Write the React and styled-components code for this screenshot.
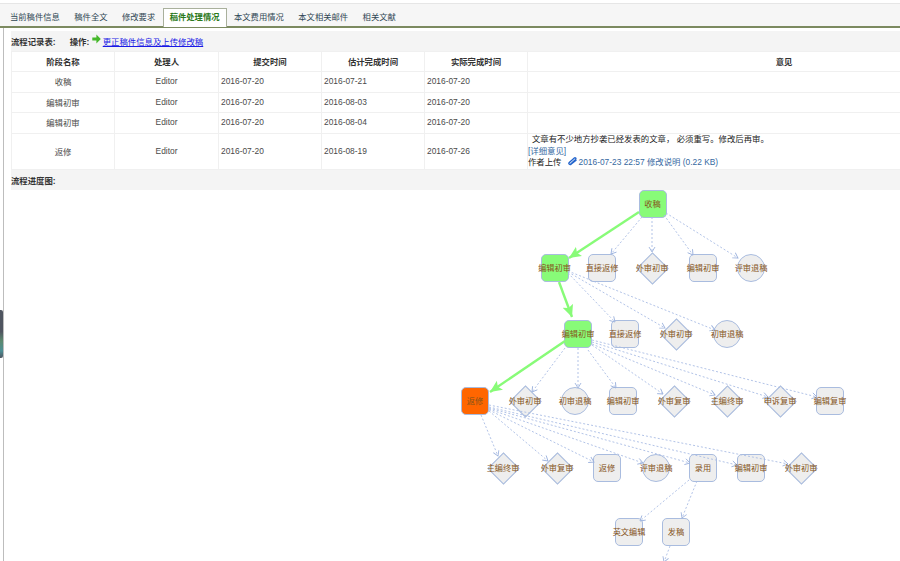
import React from "react";
import styled, { createGlobalStyle } from "styled-components";

const tabs = ["当前稿件信息", "稿件全文", "修改要求", "稿件处理情况", "本文费用情况", "本文相关邮件", "相关文献"];

const rows = [
  { stage: "收稿", due: "2016-07-21", done: "2016-07-20", h: 20 },
  { stage: "编辑初审", due: "2016-08-03", done: "2016-07-20", h: 19 },
  { stage: "编辑初审", due: "2016-08-04", done: "2016-07-20", h: 20 },
  { stage: "返修", due: "2016-08-19", done: "2016-07-26", h: 35, note: true },
];

// centre coordinates are page coordinates, the canvas starts at y = 190
const nodes = [
  { label: "收稿", x: 652.5, y: 204, shape: "rect", fill: "#88fb78" },
  { label: "编辑初审", x: 554.5, y: 268, shape: "rect", fill: "#88fb78" },
  { label: "直接返修", x: 602, y: 268, shape: "rect" },
  { label: "外审初审", x: 652, y: 268, shape: "diamond" },
  { label: "编辑初审", x: 703, y: 268, shape: "rect" },
  { label: "评审退稿", x: 751, y: 268, shape: "circle" },
  { label: "编辑初审", x: 578, y: 334, shape: "rect", fill: "#88fb78" },
  { label: "直接返修", x: 625, y: 334, shape: "rect" },
  { label: "外审初审", x: 676, y: 334, shape: "diamond" },
  { label: "初审退稿", x: 727, y: 334, shape: "circle" },
  { label: "返修", x: 475, y: 401, shape: "rect", fill: "#ff6600" },
  { label: "外审初审", x: 525, y: 401, shape: "diamond" },
  { label: "初审退稿", x: 575, y: 401, shape: "circle" },
  { label: "编辑初审", x: 623, y: 401, shape: "rect" },
  { label: "外审复审", x: 674, y: 401, shape: "diamond" },
  { label: "主编终审", x: 727, y: 401, shape: "diamond" },
  { label: "申诉复审", x: 780, y: 401, shape: "diamond" },
  { label: "编辑复审", x: 830, y: 401, shape: "rect" },
  { label: "主编终审", x: 503, y: 468, shape: "diamond" },
  { label: "外审复审", x: 557, y: 468, shape: "diamond" },
  { label: "返修", x: 607, y: 468, shape: "rect" },
  { label: "评审退稿", x: 656, y: 468, shape: "circle" },
  { label: "录用", x: 703, y: 468, shape: "rect" },
  { label: "编辑初审", x: 751, y: 468, shape: "rect" },
  { label: "外审初审", x: 801, y: 468, shape: "diamond" },
  { label: "英文编辑", x: 629, y: 532, shape: "rect" },
  { label: "发稿", x: 676, y: 532, shape: "rect" },
];

const greenEdges = [
  [639, 212, 569, 258],
  [559, 282, 572, 317],
  [565, 341, 490, 392],
];

const dashedEdges = [
  [642, 217, 611, 254],
  [652, 217, 652, 252],
  [664, 215, 693, 255],
  [666, 213, 738, 258],
  [568, 273, 615, 322],
  [568, 272, 665, 328],
  [568, 271, 715, 330],
  [565, 348, 532, 392],
  [578, 348, 578, 388],
  [588, 350, 616, 388],
  [592, 345, 663, 394],
  [592, 344, 715, 395],
  [592, 342, 768, 397],
  [592, 340, 817, 397],
  [481, 415, 498, 456],
  [489, 411, 548, 461],
  [489, 410, 594, 462],
  [489, 409, 643, 463],
  [489, 408, 690, 463],
  [489, 407, 737, 465],
  [489, 405, 788, 464],
  [689, 480, 640, 521],
  [697, 481, 682, 518],
  [670, 546, 664, 562],
];

const GlobalStyle = createGlobalStyle`
  html, body {
    margin: 0;
    background: #fff;
  }
`;

const Page = styled.div`
  position: relative;
  width: 900px;
  height: 561px;
  overflow: hidden;
  padding-top: 3px;
  box-sizing: border-box;
  font-family: "Liberation Sans", "Noto Sans CJK SC", sans-serif;
  font-size: 8.4px;
  color: #4a4a4a;
`;

const TabBar = styled.div`
  display: flex;
  align-items: flex-end;
  height: 22px;
  padding-left: 3px;
  background: #f6f6f6;
  border-top: 1px solid #e6e6e6;
  border-bottom: 2px solid #7c8a60;
`;

const Tab = styled.div`
  box-sizing: border-box;
  height: ${(p) => (p.$active ? "19px" : "18px")};
  margin-right: 0.5px;
  padding: 0 6px;
  font-size: 8.3px;
  line-height: 16px;
  font-weight: ${(p) => (p.$active ? "bold" : "normal")};
  color: ${(p) => (p.$active ? "#2c7a1c" : "#2f4654")};
  background: ${(p) => (p.$active ? "#fff" : "transparent")};
  border: 1px solid ${(p) => (p.$active ? "#a9b09c" : "transparent")};
  border-bottom: none;
  margin-bottom: ${(p) => (p.$active ? "-1px" : "0")};
`;

const Body = styled.div`
  height: 533px;
  margin-left: 3px;
  padding: 3px 0 0 7px;
  border-left: 1px solid #bdbdbd;
`;

const SectionHead = styled.div`
  display: flex;
  align-items: center;
  box-sizing: border-box;
  width: 1040px;
  height: 20px;
  padding-bottom: 1px;
  background: #f4f4f4;
  color: #333;
  font-weight: bold;
`;

const SectionTitle = styled.span`
  margin-right: 14px;
`;

const ActionIcon = styled.svg`
  margin: -3px 1.5px 0 3px;
`;

const ActionLink = styled.a`
  color: #1a1ae6;
  font-weight: normal;
  text-decoration: underline;
`;

const RecordTable = styled.table`
  width: 1030px;
  table-layout: fixed;
  border-collapse: separate;
  border-spacing: 1px;
  background: #f0f0f0;
`;

const HeadCell = styled.th`
  box-sizing: border-box;
  height: 19px;
  padding: 0 0 2px;
  background: #fff;
  color: #333;
  font-size: 8.4px;
  font-weight: bold;
`;

const Cell = styled.td`
  box-sizing: border-box;
  height: ${(p) => p.$h}px;
  padding: 0 ${(p) => (p.$center ? 0 : 2)}px 2px;
  background: #fff;
  font-size: 8.4px;
  text-align: ${(p) => (p.$center ? "center" : "left")};
`;

const NoteCell = styled.td`
  padding: 0;
  background: #fff;
  color: #222;
  font-size: 8.4px;
  line-height: 11.5px;
`;

const NoteLine = styled.div`
  display: flex;
  align-items: center;
  padding-left: ${(p) => p.$indent || 0}px;
`;

const NoteLink = styled.a`
  color: #36699f;
  text-decoration: none;
`;

const Uploader = styled.span`
  margin-right: 6px;
`;

const ClipIcon = styled.svg`
  margin: -3px 2px 0 0;
`;

const Diagram = styled.div`
  position: relative;
  height: 371px;
  margin-left: -11px;
`;

const Edges = styled.svg`
  position: absolute;
  left: 0;
  top: 0;
  z-index: 1;
`;

const Node = styled.div`
  position: absolute;
  left: ${(p) => p.$x - 14}px;
  top: ${(p) => p.$y - 204}px;
  width: 28px;
  height: 28px;
  display: flex;
  align-items: center;
  justify-content: center;

  &::before {
    content: "";
    position: absolute;
    box-sizing: border-box;
    left: ${(p) => (p.$shape === "diamond" ? "2.5px" : "0")};
    top: ${(p) => (p.$shape === "diamond" ? "2.5px" : "0")};
    width: ${(p) => (p.$shape === "diamond" ? "23px" : "28px")};
    height: ${(p) => (p.$shape === "diamond" ? "23px" : "28px")};
    background: ${(p) => p.$fill || "#eeeeee"};
    border: ${(p) => (p.$shape === "rect" ? "1.5px" : "1px")} solid #a9bcdf;
    border-radius: ${(p) => (p.$shape === "circle" ? "50%" : p.$shape === "rect" ? "5px" : "0")};
    transform: ${(p) => (p.$shape === "diamond" ? "rotate(45deg)" : "none")};
  }
`;

const NodeLabel = styled.span`
  position: relative;
  z-index: 2;
  margin-top: -2px;
  white-space: nowrap;
  color: #85541a;
  font-size: 8.2px;
`;

const SideTab = styled.div`
  position: absolute;
  left: 0;
  top: 310px;
  width: 3px;
  height: 48px;
  border-radius: 0 2px 2px 0;
  background: linear-gradient(#4f5560 0 45%, #5c8a70 65%, #4d8f95 85%, #4f5560 100%);
`;

const GreenArrow = () => (
  <ActionIcon width="9" height="10" viewBox="0 0 9 10">
    <path d="M0.3 3.4H4.4V0.6L8.8 5L4.4 9.4V6.6H0.3Z" fill="#45b82a" />
  </ActionIcon>
);

const Clip = () => (
  <ClipIcon width="9" height="9" viewBox="0 0 9 9">
    <path
      d="M2 7.8L7.6 2.4C8.4 1.4 7.3 .4 6.3 1L1.3 5.4C.2 6.6 1.6 8.2 3 7.3L8.4 3"
      fill="none"
      stroke="#2264cc"
      strokeWidth="1.4"
    />
  </ClipIcon>
);

const App = () => {
  return (
    <Page>
      <GlobalStyle />
      <TabBar>
        {tabs.map((t, i) => (
          <Tab key={t} $active={i === 3}>
            {t}
          </Tab>
        ))}
      </TabBar>
      <Body>
        <SectionHead>
          <SectionTitle>流程记录表:</SectionTitle>
          操作:
          <GreenArrow />
          <ActionLink href="#">更正稿件信息及上传修改稿</ActionLink>
        </SectionHead>
        <RecordTable>
          <colgroup>
            <col width="102" />
            <col width="103" />
            <col width="102" />
            <col width="102" />
            <col width="102" />
            <col />
          </colgroup>
          <thead>
            <tr>
              <HeadCell>阶段名称</HeadCell>
              <HeadCell>处理人</HeadCell>
              <HeadCell>提交时间</HeadCell>
              <HeadCell>估计完成时间</HeadCell>
              <HeadCell>实际完成时间</HeadCell>
              <HeadCell>意见</HeadCell>
            </tr>
          </thead>
          <tbody>
            {rows.map((r, i) => (
              <tr key={i}>
                <Cell $h={r.h} $center>{r.stage}</Cell>
                <Cell $center>Editor</Cell>
                <Cell>2016-07-20</Cell>
                <Cell>{r.due}</Cell>
                <Cell>{r.done}</Cell>
                {r.note ? (
                  <NoteCell>
                    <NoteLine $indent={4}>文章有不少地方抄袭已经发表的文章， 必须重写。修改后再审。</NoteLine>
                    <NoteLine>
                      <NoteLink href="#">[详细意见]</NoteLink>
                    </NoteLine>
                    <NoteLine>
                      <Uploader>作者上传</Uploader>
                      <Clip />
                      <NoteLink href="#">2016-07-23 22:57 修改说明 (0.22 KB)</NoteLink>
                    </NoteLine>
                  </NoteCell>
                ) : (
                  <Cell />
                )}
              </tr>
            ))}
          </tbody>
        </RecordTable>
        <SectionHead>流程进度图:</SectionHead>
        <Diagram>
          <Edges width="900" height="371" viewBox="0 190 900 371">
            <defs>
              <marker id="open" markerUnits="userSpaceOnUse" markerWidth="8" markerHeight="8" refX="6.5" refY="4" orient="auto">
                <path d="M1.5 1L6.5 4L1.5 7" fill="none" stroke="#9fb4de" strokeWidth="0.9" />
              </marker>
              <marker id="solid" markerUnits="userSpaceOnUse" markerWidth="14" markerHeight="14" refX="12" refY="7" orient="auto">
                <path d="M0 1.5L12 7L0 12.5L2.5 7Z" fill="#88fb78" />
              </marker>
            </defs>
            {dashedEdges.map(([x1, y1, x2, y2], i) => (
              <line key={i} x1={x1} y1={y1} x2={x2} y2={y2} stroke="#a9bce4" strokeWidth="0.9" strokeDasharray="2 2" markerEnd="url(#open)" />
            ))}
            {greenEdges.map(([x1, y1, x2, y2], i) => (
              <line key={i} x1={x1} y1={y1} x2={x2} y2={y2} stroke="#88fb78" strokeWidth="2.4" markerEnd="url(#solid)" />
            ))}
          </Edges>
          {nodes.map((n, i) => (
            <Node key={i} $x={n.x} $y={n.y} $shape={n.shape} $fill={n.fill}>
              <NodeLabel>{n.label}</NodeLabel>
            </Node>
          ))}
        </Diagram>
      </Body>
      <SideTab />
    </Page>
  );
};

export default App;
